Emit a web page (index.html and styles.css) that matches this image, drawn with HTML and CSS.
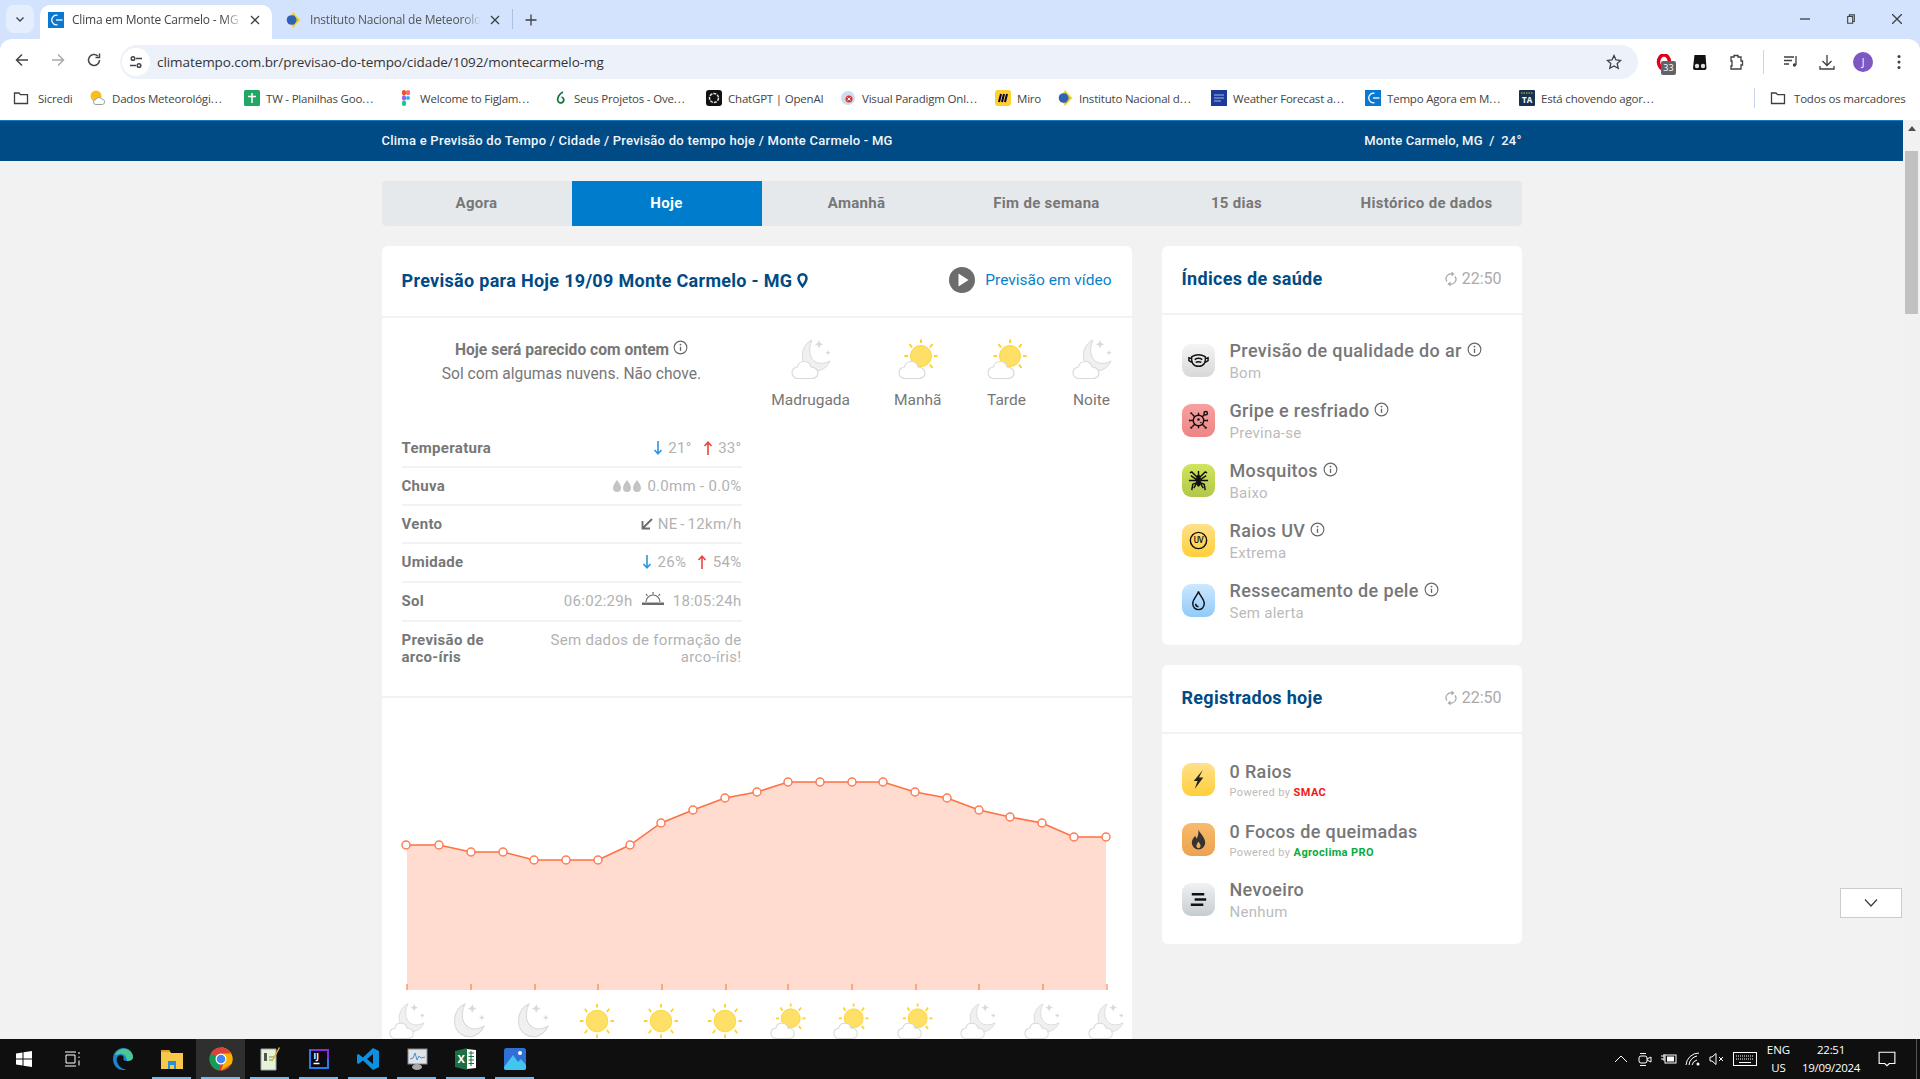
FILE: index.html
```html
<!DOCTYPE html>
<html lang="pt-BR">
<head>
<meta charset="utf-8">
<title>Clima em Monte Carmelo - MG</title>
<link rel="stylesheet" href="styles.css">
</head>
<body>
<svg class="defs" aria-hidden="true">
  <symbol id="moon" viewBox="0 0 40 40">
    <path class="moon-body" d="M21 1C10 6 8 22 17 29c8 6 18 2 22-7-9 5-18 2-20-7-1-6 0-10 2-14z"/>
    <path class="star" d="M28 1l1.200 3 3 1.200-3 1.200L28 9.500l-1.200-3.100-3-1.200 3-1.200zM37 11l.8 2 2 .8-2 .8-.8 2-.8-2-2-.8 2-.8z"/>
  </symbol>
  <symbol id="moon-full" viewBox="8 0 32 33">
    <path class="moon-body" d="M21 1C10 6 8 22 17 29c8 6 18 2 22-7-9 5-18 2-20-7-1-6 0-10 2-14z"/>
    <path class="star" d="M28 1l1.200 3 3 1.200-3 1.200L28 9.500l-1.200-3.100-3-1.200 3-1.200zM37 11l.8 2 2 .8-2 .8-.8 2-.8-2-2-.8 2-.8z"/>
  </symbol>
  <symbol id="moon-cloud" viewBox="0 0 40 40">
    <use href="#moon"/>
    <path class="cloud" d="M7 39.500c-4 0-6-3-6-6 0-3.500 3-5.500 5.500-5.500 .5-3.500 3.500-5.500 6.500-5.500 4 0 6.500 2.500 7 5.500 4 0 7 2.500 7 6s-3 5.500-6 5.500z"/>
  </symbol>
  <symbol id="sun" viewBox="0 0 40 40">
    <circle class="sun-body" cx="20" cy="20" r="12"/>
    <path class="ray" d="M20 1v4M20 35v4M1 20h4M35 20h4M6.500 6.500l2.500 3.500M33.500 6.500L31 10M6.500 33.500L9 30M33.500 33.500L31 30"/>
  </symbol>
  <symbol id="sun-cloud" viewBox="0 0 40 40">
    <circle class="sun-body" cx="23" cy="17" r="10.500"/>
    <path class="ray" d="M23 .5v3.500M23 30v3.500M6.500 17h3.500M36 17h3.500M11.500 5l2.500 3.500M34.500 5L32 8.500M34.500 29L32 25.500"/>
    <path class="cloud" d="M7 39.500c-4 0-6-3-6-6 0-3.500 3-5.500 5.500-5.500 .5-3.500 3.500-5.500 6.500-5.500 4 0 6.500 2.500 7 5.500 4 0 7 2.500 7 6s-3 5.500-6 5.500z"/>
  </symbol>
  <symbol id="info" viewBox="0 0 16 16">
    <circle cx="8" cy="8" r="6.800" fill="none" stroke="currentColor" stroke-width="1.200"/>
    <path d="M8 7.200v4.400" stroke="currentColor" stroke-width="1.400"/>
    <circle cx="8" cy="4.900" r="1" fill="currentColor"/>
  </symbol>
  <symbol id="refresh" viewBox="0 0 12 16">
    <path d="M2 10.500A4.800 4.800 0 0 1 7 3M10 5.500A4.800 4.800 0 0 1 5 13" fill="none" stroke="currentColor" stroke-width="1.300"/>
    <path d="M6.500 0.500v5L9.500 3zM5.500 10.500v5L2.500 13z" fill="currentColor"/>
  </symbol>
  <symbol id="folder" viewBox="0 0 16 16">
    <path d="M1.500 3h4.500l1.500 1.700h7v8.800h-13z" fill="none" stroke="#3c4043" stroke-width="1.300"/>
  </symbol>
  <symbol id="ct" viewBox="0 0 16 16">
    <rect width="16" height="16" fill="#0a78d1"/>
    <path d="M9.500 3.300A4.800 4.800 0 1 0 9.500 12.700" fill="none" stroke="#fff" stroke-width="1.300"/>
    <path d="M8 8h6.500" stroke="#fff" stroke-width="1.300"/>
  </symbol>
  <symbol id="inmet" viewBox="0 0 16 16">
    <path d="M8 0l7.500 8L8 16 3 8z" fill="#f7d23e"/>
    <path d="M8 2l5 6-5 6z" fill="#7fb26a"/>
    <circle cx="6.500" cy="8" r="4.800" fill="#2f62b5"/>
  </symbol>
</svg>

<header class="browser">
  <div class="tabstrip">
    <button class="tab-list"><svg class="i12" viewBox="0 0 12 12"><path d="M2.500 4.500L6 8l3.500-3.500" class="line-dark"/></svg></button>
    <div class="tab tab-active">
      <svg class="i16"><use href="#ct"/></svg>
      <span class="tab-title">Clima em Monte Carmelo - MG</span>
      <svg class="i10" viewBox="0 0 10 10"><path d="M1 1l8 8M9 1l-8 8" class="line-dark"/></svg>
    </div>
    <div class="tab">
      <svg class="i16"><use href="#inmet"/></svg>
      <span class="tab-title">Instituto Nacional de Meteorolo</span>
      <svg class="i10" viewBox="0 0 10 10"><path d="M1 1l8 8M9 1l-8 8" class="line-dark"/></svg>
    </div>
    <span class="tab-sep"></span>
    <svg class="i12 new-tab" viewBox="0 0 12 12"><path d="M6 .5v11M.5 6h11" class="line-dark"/></svg>
    <div class="win-controls">
      <svg class="i10" viewBox="0 0 10 10"><path d="M0 5h10" class="line-dark"/></svg>
      <svg class="i10" viewBox="0 0 10 12"><path d="M1 3h6v8H1zM3 3V1h6v8H7" class="line-dark"/></svg>
      <svg class="i10" viewBox="0 0 10 10"><path d="M0 0l10 10M10 0L0 10" class="line-dark"/></svg>
    </div>
  </div>
  <div class="toolbar">
    <svg class="i16 nav-btn" viewBox="0 0 16 16"><path d="M14 8H3M8 2.500L2.500 8 8 13.500" class="line-grey"/></svg>
    <svg class="i16 nav-btn" viewBox="0 0 16 16"><path d="M2 8h11M8 2.500L13.500 8 8 13.500" class="line-light"/></svg>
    <svg class="i16 nav-btn" viewBox="0 0 16 16"><path d="M13.500 8A5.500 5.500 0 1 1 11.800 4M13.500 1.500V5.500H9.500" class="line-grey"/></svg>
    <div class="omnibox">
      <span class="site-info"><svg class="i14" viewBox="0 0 14 14"><circle cx="4" cy="3.500" r="1.800" class="line-grey"/><path d="M7 3.500h6M1 10.500h6" class="line-grey"/><circle cx="10" cy="10.500" r="1.800" class="line-grey"/></svg></span>
      <span class="url">climatempo.com.br/previsao-do-tempo/cidade/1092/montecarmelo-mg</span>
      <svg class="i16 star-btn" viewBox="0 0 16 16"><path d="M8 1.500l2 4.400 4.700.5-3.500 3.200 1 4.700L8 12l-4.200 2.300 1-4.700L1.300 6.400 6 5.900z" class="line-dark"/></svg>
    </div>
    <div class="ext-icons">
      <span class="ext-opera"><svg class="i16" viewBox="0 0 16 16"><ellipse cx="8" cy="8" rx="5.500" ry="7" fill="none" stroke="#e0001b" stroke-width="3.500"/></svg><span class="ext-badge">33</span></span>
      <svg class="i16" viewBox="0 0 16 16"><path d="M2.500 1h11l1 13a2 2 0 0 1-2 2H3a2 2 0 0 1-2-2z" fill="#111"/><circle cx="5" cy="12" r="2.200" fill="#ddd"/><circle cx="11" cy="12" r="2.200" fill="#ddd"/></svg>
      <svg class="i16" viewBox="0 0 16 16"><path d="M3 3h3V1.500h4V3h3v4h1.500v4H13v4H3v-3h1V7H3z" class="line-dark"/></svg>
      <span class="tool-sep"></span>
      <svg class="i16" viewBox="0 0 16 16"><path d="M1 3h10M1 6.500h8M1 10h5M13 2v9" class="line-dark"/><circle cx="11.500" cy="11" r="1.700" fill="#3c4043"/></svg>
      <svg class="i16" viewBox="0 0 16 16"><path d="M8 1v10M3.500 7L8 11.500 12.500 7M1 12v3h14v-3" class="line-dark"/></svg>
      <span class="avatar">J</span>
      <svg class="i16" viewBox="0 0 16 16"><circle cx="8" cy="2.500" r="1.500" fill="#3c4043"/><circle cx="8" cy="8" r="1.500" fill="#3c4043"/><circle cx="8" cy="13.500" r="1.500" fill="#3c4043"/></svg>
    </div>
  </div>
  <nav class="bookmarks">
    <a class="bm bm-first"><svg class="i16"><use href="#folder"/></svg>Sicredi</a>
    <a class="bm"><svg class="i16" viewBox="0 0 16 16"><circle cx="6" cy="6" r="5.500" fill="#f9bf1e"/><path d="M6 14.500a2.500 2.500 0 0 1 0-5 3 3 0 0 1 5.500-.500 2.800 2.800 0 0 1 1 5.500z" fill="#fff" stroke="#9aa0a6"/></svg><span>Dados Meteorológi<span class="ell">...</span></span></a>
    <a class="bm"><svg class="i16" viewBox="0 0 16 16"><rect width="16" height="16" rx="1.500" fill="#23a566"/><path d="M8 3v10M4 6.500h8" stroke="#fff" stroke-width="1.500"/></svg><span>TW - Planilhas Goo<span class="ell">...</span></span></a>
    <a class="bm"><svg class="i16" viewBox="0 0 16 16"><rect x="4" y="0" width="4" height="5.300" rx="2" fill="#f24e1e"/><rect x="8" y="0" width="4" height="5.300" rx="2" fill="#ff7262"/><rect x="4" y="5.300" width="4" height="5.300" rx="2" fill="#a259ff"/><circle cx="10" cy="8" r="2" fill="#1abcfe"/><rect x="4" y="10.600" width="4" height="5.300" rx="2" fill="#0acf83"/></svg><span>Welcome to FigJam<span class="ell">...</span></span></a>
    <a class="bm"><svg class="i16" viewBox="0 0 16 16"><path d="M11 2C7 4 5 8 6 11a3 3 0 1 0 3.500-4" fill="none" stroke="#19703c" stroke-width="1.800"/></svg><span>Seus Projetos - Ove<span class="ell">...</span></span></a>
    <a class="bm"><svg class="i16" viewBox="0 0 16 16"><rect width="16" height="16" rx="3" fill="#111"/><circle cx="8" cy="8" r="4.500" fill="none" stroke="#ddd" stroke-width="1.500" stroke-dasharray="3 1"/></svg>ChatGPT | OpenAI</a>
    <a class="bm"><svg class="i16" viewBox="0 0 16 16"><circle cx="8" cy="8" r="7" fill="#cfdcec"/><circle cx="9" cy="9" r="3.500" fill="#d8383a"/><path d="M7.500 7.500l3 3M10.500 7.500l-3 3" stroke="#fff"/></svg><span>Visual Paradigm Onl<span class="ell">...</span></span></a>
    <a class="bm"><svg class="i16" viewBox="0 0 16 16"><rect width="16" height="16" rx="3" fill="#ffd02f"/><path d="M4 12l2-8M7 12l2-8M10 12l2-8" stroke="#050038" stroke-width="2"/></svg>Miro</a>
    <a class="bm"><svg class="i16"><use href="#inmet"/></svg><span>Instituto Nacional d<span class="ell">...</span></span></a>
    <a class="bm"><svg class="i16" viewBox="0 0 16 16"><rect width="16" height="16" fill="#1a3a9c"/><path d="M3 5h10M3 8h10M3 11h7" stroke="#cfd8f0" stroke-width=".8"/></svg><span>Weather Forecast a<span class="ell">...</span></span></a>
    <a class="bm"><svg class="i16"><use href="#ct"/></svg><span>Tempo Agora em M<span class="ell">...</span></span></a>
    <a class="bm"><svg class="i16" viewBox="0 0 16 16"><rect width="16" height="16" rx="1" fill="#17324d"/><path d="M2 3h12" stroke="#e8c43a" stroke-dasharray="1.500 1"/><text x="3" y="13" class="ta-mark">TA</text></svg><span>Está chovendo agor<span class="ell">...</span></span></a>
    <span class="bm-sep"></span>
    <a class="bm bm-all"><svg class="i16"><use href="#folder"/></svg>Todos os marcadores</a>
  </nav>
</header>

<div class="window">
  <main class="viewport">
    <div class="crumb-bar">
      <div class="crumb-inner">
        <span>Clima e Previsão do Tempo / Cidade / Previsão do tempo hoje / Monte Carmelo - MG</span>
        <span class="crumb-place">Monte Carmelo, MG &nbsp;/&nbsp; 24°</span>
      </div>
    </div>
    <div class="container">
      <div class="day-tabs">
        <span class="day-tab">Agora</span>
        <span class="day-tab day-tab-active">Hoje</span>
        <span class="day-tab">Amanhã</span>
        <span class="day-tab">Fim de semana</span>
        <span class="day-tab">15 dias</span>
        <span class="day-tab">Histórico de dados</span>
      </div>
      <div class="columns">
        <section class="card forecast">
          <div class="forecast-head">
            <h1 class="forecast-title">Previsão para Hoje 19/09 Monte Carmelo - MG
              <svg class="pin" viewBox="0 0 11 15"><path d="M5.500 1.300a4 4 0 0 1 4 4c0 3-4 8-4 8s-4-5-4-8a4 4 0 0 1 4-4z" fill="none" stroke="currentColor" stroke-width="2.500"/></svg>
            </h1>
            <a class="video-link">
              <svg class="play" viewBox="0 0 26 26"><circle cx="13" cy="13" r="13" fill="#6c6c6c"/><path d="M9.500 6.500l10 6.500-10 6.500z" fill="#fff"/></svg>
              Previsão em vídeo
            </a>
          </div>
          <div class="forecast-body">
            <div class="forecast-left">
              <div class="summary">
                <div class="summary-head">Hoje será parecido com ontem <svg class="info"><use href="#info"/></svg></div>
                <div>Sol com algumas nuvens. Não chove.</div>
              </div>
              <div class="rows">
                <div class="row"><span class="row-label">Temperatura</span><span class="row-val"><svg class="arrow arrow-down" viewBox="0 0 10 14"><path d="M5 0v12.500M1.500 9L5 12.800 8.500 9"/></svg> 21° <svg class="arrow arrow-up" viewBox="0 0 10 14"><path d="M5 14V1.500M1.500 5L5 1.200 8.500 5"/></svg> 33°</span></div>
                <div class="row"><span class="row-label">Chuva</span><span class="row-val"><svg class="drops" viewBox="0 0 30 14"><path d="M5 1c2 3 4 5 4 8a4 4 0 0 1-8 0c0-3 2-5 4-8zM15 1c2 3 4 5 4 8a4 4 0 0 1-8 0c0-3 2-5 4-8zM25 1c2 3 4 5 4 8a4 4 0 0 1-8 0c0-3 2-5 4-8z"/></svg> 0.0mm - 0.0%</span></div>
                <div class="row"><span class="row-label">Vento</span><span class="row-val row-val-tight"><svg class="wind" viewBox="0 0 12 12"><path d="M11 1L2 10M1.500 3v7.500H9"/></svg> NE - 12km/h</span></div>
                <div class="row row-tall"><span class="row-label">Umidade</span><span class="row-val"><svg class="arrow arrow-down" viewBox="0 0 10 14"><path d="M5 0v12.500M1.500 9L5 12.800 8.500 9"/></svg> 26% <svg class="arrow arrow-up" viewBox="0 0 10 14"><path d="M5 14V1.500M1.500 5L5 1.200 8.500 5"/></svg> 54%</span></div>
                <div class="row row-tall"><span class="row-label">Sol</span><span class="row-val">06:02:29h <svg class="sunrise" viewBox="0 0 22 14"><path d="M4 10a7 7 0 0 1 14 0" fill="none" stroke="#6c6c6c" stroke-width="1.200"/><path d="M0 10.500h22V13H0z" fill="#6c6c6c"/><path d="M11 0v2.500M4 2l1.500 2M18 2l-1.500 2" stroke="#6c6c6c" stroke-width="1.200"/></svg> 18:05:24h</span></div>
                <div class="row row-last"><span class="row-label">Previsão de<br>arco-íris</span><span class="row-val row-note">Sem dados de formação de<br>arco-íris!</span></div>
              </div>
            </div>
            <div class="periods">
              <div class="period"><svg class="period-icon"><use href="#moon-cloud"/></svg>Madrugada</div>
              <div class="period"><svg class="period-icon"><use href="#sun-cloud"/></svg>Manhã</div>
              <div class="period"><svg class="period-icon"><use href="#sun-cloud"/></svg>Tarde</div>
              <div class="period"><svg class="period-icon"><use href="#moon-cloud"/></svg>Noite</div>
            </div>
          </div>
          <div class="chart-wrap">
            <svg class="chart" viewBox="382 698 750 341">
              <polygon class="area" points="407,990 407,845 439,845 471,852 503,852 534,860 566,860 598,860 630,845 661,823 693,810 725,798 757,792 788,782 820,782 852,782 883,782 915,792 947,798 979,810 1010,817 1042,823 1074,837 1106,837 1106,990"/>
              <path class="ticks" d="M407 984v6M471 984v6M535 984v6M598 984v6M662 984v6M726 984v6M788 984v6M852 984v6M916 984v6M979 984v6M1043 984v6M1107 984v6"/>
              <polyline class="temp-line" points="406,845 439,845 471,852 503,852 534,860 566,860 598,860 630,845 661,823 693,810 725,798 757,792 788,782 820,782 852,782 883,782 915,792 947,798 979,810 1010,817 1042,823 1074,837 1106,837"/>
              <g class="temp-dots">
                <circle cx="406" cy="845" r="4"/><circle cx="439" cy="845" r="4"/><circle cx="471" cy="852" r="4"/><circle cx="503" cy="852" r="4"/><circle cx="534" cy="860" r="4"/><circle cx="566" cy="860" r="4"/><circle cx="598" cy="860" r="4"/><circle cx="630" cy="845" r="4"/><circle cx="661" cy="823" r="4"/><circle cx="693" cy="810" r="4"/><circle cx="725" cy="798" r="4"/><circle cx="757" cy="792" r="4"/><circle cx="788" cy="782" r="4"/><circle cx="820" cy="782" r="4"/><circle cx="852" cy="782" r="4"/><circle cx="883" cy="782" r="4"/><circle cx="915" cy="792" r="4"/><circle cx="947" cy="798" r="4"/><circle cx="979" cy="810" r="4"/><circle cx="1010" cy="817" r="4"/><circle cx="1042" cy="823" r="4"/><circle cx="1074" cy="837" r="4"/><circle cx="1106" cy="837" r="4"/>
              </g>
              <use href="#moon-cloud" x="389" y="1003" width="36" height="36"/>
              <use href="#moon-full" x="451" y="1003" width="34" height="35"/>
              <use href="#moon-full" x="515" y="1003" width="34" height="35"/>
              <use href="#sun" x="579" y="1003" width="36" height="36"/>
              <use href="#sun" x="643" y="1003" width="36" height="36"/>
              <use href="#sun" x="707" y="1003" width="36" height="36"/>
              <use href="#sun-cloud" x="770" y="1003" width="36" height="36"/>
              <use href="#sun-cloud" x="833" y="1003" width="36" height="36"/>
              <use href="#sun-cloud" x="897" y="1003" width="36" height="36"/>
              <use href="#moon-cloud" x="960" y="1003" width="36" height="36"/>
              <use href="#moon-cloud" x="1024" y="1003" width="36" height="36"/>
              <use href="#moon-cloud" x="1088" y="1003" width="36" height="36"/>
            </svg>
          </div>
        </section>
        <aside class="side">
          <section class="card">
            <div class="side-head"><h2 class="side-title">Índices de saúde</h2><span class="side-time"><svg class="refresh"><use href="#refresh"/></svg>22:50</span></div>
            <div class="side-list">
              <div class="idx"><span class="idx-icon ic-grey"><svg viewBox="0 0 24 24"><path d="M5 8c5-3 9-3 14 0 1 5-1 10-7 10S4 13 5 8zM5 10l-3-1v3l3 2M19 10l3-1v3l-3 2M8 11c3-2 5-2 8 0M9 14c2-1 4-1 6 0" class="line-black"/></svg></span><div class="idx-text"><div class="idx-title">Previsão de qualidade do ar <svg class="info"><use href="#info"/></svg></div><div class="idx-sub">Bom</div></div></div>
              <div class="idx"><span class="idx-icon ic-red"><svg viewBox="0 0 24 24"><circle cx="12" cy="12" r="5.500" class="line-black"/><path d="M12 6.500V4M12 17.500V20M6.500 12H4M17.500 12H20M8 8L5.500 5.500M16 16l2.500 2.500M16 8l2-2M8 16l-2.500 2.500" class="line-black"/><circle cx="12" cy="11" r="1.300" fill="#111"/><circle cx="14.500" cy="14" r=".8" fill="#111"/><circle cx="4.500" cy="4.500" r="1.200" fill="#111"/><circle cx="19.500" cy="4.500" r="1.800" class="line-black"/><circle cx="3" cy="12" r="1.100" fill="#111"/><circle cx="21" cy="12" r="1.100" fill="#111"/><circle cx="4.500" cy="19.500" r="1.200" fill="#111"/><circle cx="19.500" cy="19.500" r="1.200" fill="#111"/></svg></span><div class="idx-text"><div class="idx-title">Gripe e resfriado <svg class="info"><use href="#info"/></svg></div><div class="idx-sub">Previna-se</div></div></div>
              <div class="idx"><span class="idx-icon ic-green"><svg viewBox="0 0 24 24"><ellipse cx="12" cy="12" rx="2.500" ry="6.500" fill="#111"/><path d="M12 10L5 3l-2 1M12 10l7-7 2 1M11 12H2M13 12h9M11 14l-5 2-1 6M13 14l5 2 1 6M10 11L4 7M14 11l6-4M12 6V2M10 15l-3 5M14 15l3 5" class="line-black"/></svg></span><div class="idx-text"><div class="idx-title">Mosquitos <svg class="info"><use href="#info"/></svg></div><div class="idx-sub">Baixo</div></div></div>
              <div class="idx"><span class="idx-icon ic-yellow"><svg viewBox="0 0 24 24"><circle cx="12" cy="12" r="8.500" class="line-black"/><text x="12" y="15" class="uv-mark">UV</text></svg></span><div class="idx-text"><div class="idx-title">Raios UV <svg class="info"><use href="#info"/></svg></div><div class="idx-sub">Extrema</div></div></div>
              <div class="idx"><span class="idx-icon ic-blue"><svg viewBox="0 0 24 24"><path d="M12 2.500C13 7 18 10 18 15.500a6 6 0 0 1-12 0C6 10 11 7 12 2.500z" class="line-black"/><path d="M9 15.500a3 3 0 0 0 3 3" class="line-black"/></svg></span><div class="idx-text"><div class="idx-title">Ressecamento de pele <svg class="info"><use href="#info"/></svg></div><div class="idx-sub">Sem alerta</div></div></div>
            </div>
          </section>
          <section class="card">
            <div class="side-head"><h2 class="side-title">Registrados hoje</h2><span class="side-time"><svg class="refresh"><use href="#refresh"/></svg>22:50</span></div>
            <div class="side-list">
              <div class="idx"><span class="idx-icon ic-yellow"><svg viewBox="0 0 24 24"><path d="M16.500 2L7 13.500h4L8 22l9-12h-4.500z" fill="#222"/></svg></span><div class="idx-text idx-text-low"><div class="idx-title">0 Raios</div><div class="idx-powered">Powered by <b class="smac">SMAC</b></div></div></div>
              <div class="idx"><span class="idx-icon ic-orange"><svg viewBox="0 0 24 24"><path d="M12 1.500c1 4 7 7.500 7 14a7 7 0 0 1-14 0c0-3.500 2-5.500 3.500-7.500.5 1.500 1 2.500 1.500 3C11.500 9 12 6 12 1.500zM12 14c-1 2-2.200 3-2.200 4.800a2.200 2.200 0 0 0 4.400 0c0-1.800-1.200-3-2.200-4.800z" fill="#333" fill-rule="evenodd"/></svg></span><div class="idx-text idx-text-low"><div class="idx-title">0 Focos de queimadas</div><div class="idx-powered">Powered by <b class="agro">Agroclima PRO</b></div></div></div>
              <div class="idx"><span class="idx-icon ic-fog"><svg viewBox="0 0 24 24"><path d="M5 6.500h13M8 12h12M4 17.500h13" stroke="#111" stroke-width="2.400" fill="none"/></svg></span><div class="idx-text"><div class="idx-title">Nevoeiro</div><div class="idx-sub">Nenhum</div></div></div>
            </div>
          </section>
        </aside>
      </div>
    </div>
    <button class="float-btn"><svg class="i16" viewBox="0 0 16 16"><path d="M2 4.500L8 11l6-6.500" class="line-dark"/></svg></button>
  </main>
  <div class="scrollbar">
    <svg class="scroll-arrow" viewBox="0 0 8 5"><path d="M4 0l4 5H0z" fill="#505050"/></svg>
    <div class="scroll-thumb"></div>
  </div>
</div>

<footer class="taskbar">
  <span class="slot"><svg class="i16" viewBox="0 0 16 16"><path d="M0 2.500l6.500-1v6H0zM7.500 1.300L16 0v7.500H7.500zM0 8.500h6.500v6l-6.500-1zM7.500 8.500H16V16l-8.500-1.300z" fill="#fff"/></svg></span>
  <span class="slot"><svg class="i16" viewBox="0 0 16 16"><path d="M1 1h11M1 15h11M2 4h9v8H2zM15 1v2M15 5.500v1.500M15 9.500v5" fill="none" stroke="#fff" stroke-width="1"/></svg></span>
  <span class="slot"><svg class="i24" viewBox="0 0 24 24"><path d="M2 12C2 5 7 1 12.500 1 18 1 22 5 22 10c0 3-3 4-6 4-3 0-4-1-3.500-2.500 1-2.500-2-4-4.500-3C5.500 9.500 5 13 7 17c1.500 3 5 6 9 5-2 1-3 1-4 1C6 23 2 18 2 12z" fill="#1a83d4"/><path d="M4 8c2-5 7-7 11-6 4 1 7 5 7 8 0 3-3 4-6 4 0-5-4-8-7-7-2 .500-4 1-5 1z" fill="#4cc58f"/></svg></span>
  <span class="slot slot-open"><svg class="i24" viewBox="0 0 24 24"><path d="M1 3h8l2 3h12v16H1z" fill="#f7c948"/><path d="M1 3h8l1 2H1z" fill="#e0a526"/><path d="M8 14h8v8h-2v-4h-4v4H8z" fill="#2b8fd8"/></svg></span>
  <span class="slot slot-open slot-active"><svg class="i24" viewBox="0 0 24 24"><circle cx="12" cy="12" r="11.500" fill="#db4437"/><path d="M12 12L1.800 6.800A11.500 11.500 0 0 0 10 23.300z" fill="#0f9d58"/><path d="M12 .5A11.500 11.500 0 0 1 22.500 17L12 23.500 16 12z" fill="#f4b400"/><path d="M2 6.300A11.500 11.500 0 0 1 12 .5a11.500 11.500 0 0 1 10 6H12z" fill="#db4437"/><circle cx="12" cy="12" r="5.500" fill="#fff"/><circle cx="12" cy="12" r="4.300" fill="#4285f4"/></svg></span>
  <span class="slot slot-open"><svg class="i24" viewBox="0 0 24 24"><path d="M3 2h15v21H3z" fill="#e8f3d6" stroke="#9aa" stroke-width="1"/><path d="M6 6h3v8H6z" fill="#555"/><path d="M11 10h5M11 13h4" stroke="#7b9a3a"/><path d="M22 1l-6 11-2 3 1-4 6-11z" fill="#e8a33a"/></svg></span>
  <span class="slot slot-open"><svg class="i24" viewBox="0 0 24 24"><rect x="2" y="2" width="20" height="20" fill="#2c7be5"/><path d="M2 2h20v10z" fill="#8a2be2"/><rect x="4" y="4" width="16" height="16" fill="#0a0a14"/><text x="6.500" y="12" class="ij">IJ</text><path d="M6.500 16.500h6" stroke="#fff" stroke-width="1.500"/></svg></span>
  <span class="slot slot-open"><svg class="i24" viewBox="0 0 24 24"><path d="M17 1l6 3v16l-6 3L7 13.500 2.500 17 1 16V8l1.500-1L7 10.500zM17 7l-6 5 6 5z" fill="#0f8fe0" fill-rule="evenodd"/></svg></span>
  <span class="slot slot-open"><svg class="i24" viewBox="0 0 24 24"><rect x="3" y="2" width="19" height="15" fill="#dfe4e8" stroke="#888"/><path d="M5 12l3-1 2-5 2 7 2-4 2 2 4-1" stroke="#4a90d9" fill="none"/><ellipse cx="12" cy="20" rx="5" ry="3" fill="#aaa"/></svg></span>
  <span class="slot slot-open"><svg class="i24" viewBox="0 0 24 24"><path d="M13 2l9 1v18l-9 1z" fill="#fff"/><path d="M14.500 6H20M14.500 9.500H20M14.500 13H20M14.500 16.500H20M17 4v15" stroke="#1d6f42"/><path d="M1 4l12-3v22L1 20z" fill="#1d6f42"/><text x="3.500" y="16" class="xl-mark">X</text></svg></span>
  <span class="slot slot-open"><svg class="i24" viewBox="0 0 24 24"><rect x="1" y="1" width="22" height="22" rx="2.500" fill="#2f6fd6"/><path d="M1 20l9-12 5 7 3-3 5 6v3a2 2 0 0 1-2 2H3a2 2 0 0 1-2-2z" fill="#43c5ee"/><circle cx="17" cy="6" r="2" fill="#fff"/></svg></span>
  <div class="tray">
    <svg class="tray-icon" viewBox="0 0 16 16"><path d="M2 11l6-6 6 6" class="line-white"/></svg>
    <svg class="tray-icon" viewBox="0 0 16 16"><rect x="2" y="5" width="8" height="7" rx="2" class="line-white"/><path d="M10 8l4-2v5l-4-2M3 2.500h6M3 14.500h6" class="line-white"/></svg>
    <svg class="tray-icon" viewBox="0 0 16 16"><rect x="4" y="4" width="11" height="8" class="line-white"/><rect x="6" y="5.500" width="7" height="5" fill="#fff"/><path d="M0 5h3M0 8h3M3 3v7" class="line-white"/></svg>
    <svg class="tray-icon" viewBox="0 0 16 16"><path d="M1 14A13 13 0 0 1 14 2M4 14a10 10 0 0 1 8-9M7 14a7 7 0 0 1 5-5" class="line-white"/><circle cx="13" cy="13" r="1.500" fill="#fff"/></svg>
    <svg class="tray-icon" viewBox="0 0 16 16"><path d="M1 6h2l4-3.500v11L3 10H1zM10 6l4 4M14 6l-4 4" class="line-white"/></svg>
    <svg class="tray-kb" viewBox="0 0 24 14"><rect x=".5" y=".5" width="23" height="13" class="line-white"/><path d="M3 4h18M3 7h18" stroke="#fff" stroke-dasharray="1 1"/><path d="M6 10.500h12" stroke="#fff"/></svg>
    <div class="tray-lang">ENG<br>US</div>
    <div class="tray-clock">22:51<br>19/09/2024</div>
    <svg class="tray-icon tray-notif" viewBox="0 0 16 16"><path d="M1 2h14v10H10l-2 2-2-2H1z" class="line-white"/></svg>
    <span class="show-desktop"></span>
  </div>
</footer>
</body>
</html>
```

FILE: styles.css
```css
* { box-sizing: border-box; }
html, body { margin: 0; height: 100%; }
body {
  display: flex;
  flex-direction: column;
  height: 100vh;
  overflow: hidden;
  font-family: Roboto, "Liberation Sans", sans-serif;
  background: #f2f2f2;
}
button { border: 0; padding: 0; background: none; font: inherit; }
h1, h2 { margin: 0; }
.defs { width: 0; height: 0; position: absolute; }
.i10 { width: 10px; height: 10px; flex: none; }
.i12 { width: 12px; height: 12px; }
.i14 { width: 14px; height: 14px; }
.i16 { width: 16px; height: 16px; flex: none; }
.i24 { width: 24px; height: 24px; }
.line-dark, .line-grey, .line-light, .line-black, .line-white { fill: none; stroke-width: 1.300; }
.line-dark { stroke: #3c4043; }
.line-grey { stroke: #444; stroke-width: 1.500; }
.line-light { stroke: #a8abb0; stroke-width: 1.500; }
.line-black { stroke: #111; stroke-width: 1.500; }
.line-white { stroke: #fff; stroke-width: 1; }

/* browser chrome */
.browser { flex: none; height: 120px; background: #d3e3fd; font-family: "Open Sans", "Liberation Sans", sans-serif; color: #3c4043; }
.tabstrip { height: 39px; display: flex; align-items: flex-start; padding: 5px 0 0 6px; }
.tab-list { width: 28px; height: 28px; border-radius: 8px; background: #e4eefd; display: flex; align-items: center; justify-content: center; margin-right: 6px; }
.tab { width: 232px; height: 34px; padding: 0 12px 5px 8px; display: flex; align-items: center; gap: 8px; font-size: 12px; letter-spacing: -.2px; border-radius: 10px 10px 0 0; }
.tab-active { background: #fff; color: #444; }
.tab-title { flex: 1; white-space: nowrap; overflow: hidden; min-width: 0; -webkit-mask-image: linear-gradient(to left, transparent 0, #000 18px); mask-image: linear-gradient(to left, transparent 0, #000 18px); }
.tab:not(.tab-active) { width: 238px; padding-left: 13px; padding-right: 10px; color: #555; gap: 9px; }
.tab-sep { width: 1px; height: 20px; background: #a8c0e4; margin: 4px 0 0 2px; }
.new-tab { margin: 9px 0 0 12px; }
.win-controls { margin-left: auto; display: flex; align-items: center; gap: 36px; padding: 9px 18px 0 0; }
.toolbar { height: 41px; display: flex; align-items: center; padding: 0 14px; background: #fff; border-radius: 12px 12px 0 0; }
.nav-btn { margin-right: 20px; flex: none; }
.nav-btn:nth-child(3) { margin-right: 18px; }
.omnibox { width: 1518px; height: 34px; border-radius: 17px; background: #edf2fa; display: flex; align-items: center; padding: 0 16px 0 2px; margin-top: 5px; flex: none; }
.site-info { width: 28px; height: 28px; border-radius: 50%; background: #fff; display: flex; align-items: center; justify-content: center; margin-right: 7px; }
.url { font-size: 13.500px; letter-spacing: -.07px; color: #333; white-space: nowrap; }
.star-btn { margin-left: auto; }
.ext-icons { display: flex; align-items: center; gap: 20px; margin-left: 18px; margin-top: 5px; }
.ext-opera { position: relative; display: flex; }
.ext-badge { position: absolute; left: 5px; top: 7px; width: 15px; height: 14px; background: #5f6368; color: #fff; font-size: 9px; line-height: 14px; text-align: center; border-radius: 2px; }
.tool-sep { width: 1px; height: 24px; background: #c7d6ee; margin: 0 -1px; }
.avatar { width: 20px; height: 20px; border-radius: 50%; background: #7e57c2; color: #fff; font-size: 10px; line-height: 20px; text-align: center; margin: 0 -2px; }
.bookmarks {
  height: 40px;
  display: grid;
  grid-template-columns: 77px 154px 154px 154px 154px 134px 155px 62px 154px 154px 154px 235px 16px 1fr;
  align-items: center;
  padding: 0 0 4px 13px;
  font-size: 11.500px;
  letter-spacing: -.2px;
  color: #444;
  background: #fff;
}
.bm { display: flex; align-items: center; gap: 6px; white-space: nowrap; }
.bm-first { gap: 9px; }
.ell { letter-spacing: 1px; }
.ta-mark { font-size: 8px; font-weight: 700; fill: #fff; letter-spacing: 0; }
.bm-sep { width: 1px; height: 20px; background: #c7d6ee; }
.bm-all { gap: 8px; }

/* page */
.window { flex: 1; min-height: 0; display: flex; }
.viewport { flex: 1; min-width: 0; position: relative; overflow: hidden; }
.scrollbar { width: 17px; flex: none; background: #f1f1f1; display: flex; flex-direction: column; align-items: center; padding-top: 6px; }
.scroll-arrow { width: 8px; height: 5px; }
.scroll-thumb { width: 13px; height: 163px; margin-top: 20px; background: #c1c1c1; }
.crumb-bar { height: 41px; background: #004b85; border-top: 1px solid #0a7cc4; color: #f4f6f9; font-size: 13px; font-weight: 500; letter-spacing: .25px; }
.crumb-inner { width: 1140px; margin: 0 auto; height: 100%; display: flex; justify-content: space-between; align-items: center; padding-bottom: 1px; }
.crumb-place { letter-spacing: .14px; }
.container { width: 1140px; margin: 20px auto 0; }
.day-tabs { display: grid; grid-template-columns: repeat(6, 1fr); height: 45px; background: #e6e9ec; border-radius: 4px; overflow: hidden; }
.day-tab { display: flex; align-items: center; justify-content: center; font-size: 15px; font-weight: 700; letter-spacing: .3px; color: #777; padding-bottom: 2px; }
.day-tab-active { background: #007ccc; color: #fff; }
.columns { display: grid; grid-template-columns: 750px 360px; gap: 30px; margin-top: 20px; }
.card { background: #fff; border-radius: 6px; }
.forecast { border-radius: 6px 6px 0 0; }
.forecast-head { height: 72px; padding: 0 20px 2px; border-bottom: 2px solid #f2f2f2; display: flex; align-items: center; justify-content: space-between; }
.forecast-title { font-size: 18px; font-weight: 700; letter-spacing: .3px; color: #004b85; display: flex; align-items: center; gap: 5px; }
.pin { width: 11px; height: 15px; }
.video-link { display: flex; align-items: center; gap: 10px; font-size: 15.500px; color: #0a7fc9; }
.play { width: 26px; height: 26px; }
.forecast-body { display: grid; grid-template-columns: 340px 1fr; padding: 20px 20px 30px; border-bottom: 2px solid #f2f2f2; }
.summary { text-align: center; font-size: 15.600px; line-height: 24px; color: #777; }
.summary-head { font-weight: 700; }
.info { width: 15px; height: 15px; color: #666; flex: none; }
.rows { margin-top: 44px; font-size: 15px; letter-spacing: .3px; }
.row { min-height: 38px; display: flex; align-items: center; justify-content: space-between; border-bottom: 2px solid #f2f2f2; }
.row-tall { min-height: 39px; padding-bottom: 1px; }
.row-last { border-bottom: 0; align-items: flex-start; padding-top: 10px; line-height: 17px; }
.row-label { font-weight: 700; color: #777; }
.row-val { color: #b2b2b2; display: flex; align-items: center; gap: 1.500px; white-space: pre; }
.row-val-tight { word-spacing: -1.200px; }
.row-note { display: block; text-align: right; white-space: normal; }
.arrow { width: 10px; height: 14px; fill: none; stroke-width: 1.600; }
.arrow-down { stroke: #2b96e0; }
.arrow-up { stroke: #e8453c; margin-left: 5.500px; }
.drops { width: 30px; height: 14px; fill: #c4c4c4; }
.wind { width: 12px; height: 12px; fill: none; stroke: #6c6c6c; stroke-width: 1.800; }
.sunrise { width: 22px; height: 14px; margin: -4px 3.500px 0; }
.periods { display: flex; justify-content: flex-end; gap: 45px; align-items: flex-start; }
.period { display: flex; flex-direction: column; align-items: center; gap: 12px; font-size: 15.500px; color: #777; padding-top: 1px; }
.period:first-child { margin-right: -1px; }
.period-icon { width: 40px; height: 40px; }
.moon-body { fill: #f0f0f0; stroke: #d9d9d9; stroke-width: 1; }
.star { fill: #d9d9d9; }
.cloud { fill: #fff; stroke: #d9d9d9; stroke-width: 1.200; }
.sun-body { fill: #ffe066; stroke: #fcd53f; stroke-width: 1; }
.ray { stroke: #ffd02e; stroke-width: 2; fill: none; }
.chart-wrap { height: 341px; }
.chart { display: block; width: 750px; height: 341px; }
.area { fill: #ffdbd0; }
.ticks { stroke: #ff6a3d; stroke-width: 1; fill: none; }
.temp-line { fill: none; stroke: #ff7043; stroke-width: 1.500; }
.temp-dots circle { fill: #fff; stroke: #ff7b54; stroke-width: 1.500; }
.side { display: flex; flex-direction: column; gap: 20px; }
.side-head { height: 69px; padding: 0 20px 2px; border-bottom: 2px solid #f2f2f2; display: flex; align-items: center; justify-content: space-between; }
.side-title { font-size: 18px; font-weight: 700; letter-spacing: .3px; color: #004b85; }
.side-time { display: flex; align-items: center; gap: 5px; font-size: 16px; color: #aaa; }
.refresh { width: 12px; height: 16px; color: #aaa; }
.side-list { display: flex; flex-direction: column; gap: 27px; padding: 29px 20px 28px; }
.idx { height: 33px; display: flex; align-items: flex-start; gap: 15px; }
.idx-text { margin-top: -3px; }
.idx-text-low { margin-top: -1px; }
.idx-icon { width: 33px; height: 33px; border-radius: 9px; display: flex; align-items: center; justify-content: center; flex: none; }
.idx-icon svg { width: 23px; height: 23px; }
.uv-mark { font-size: 8.500px; font-weight: 500; text-anchor: middle; fill: #111; letter-spacing: -.5px; }
.ic-grey { background: linear-gradient(#f4f4f4, #d8d8d8); }
.ic-red { background: linear-gradient(#f7a0a0, #ee8585); }
.ic-green { background: linear-gradient(#d3e35c, #b2c74c); }
.ic-yellow { background: linear-gradient(#ffe08a, #ffcf3a); }
.ic-blue { background: linear-gradient(#cde8ff, #90caf9); }
.ic-orange { background: linear-gradient(#f7bb6e, #eea24f); }
.ic-fog { background: linear-gradient(#f0f2f3, #c5ccd0); }
.idx-title { font-size: 18px; font-weight: 500; letter-spacing: .35px; line-height: 20px; color: #777; display: flex; align-items: center; gap: 5px; white-space: nowrap; }
.idx-title .info { margin-top: -3px; }
.idx-sub { font-size: 15px; letter-spacing: .25px; line-height: 20px; margin-top: 2px; color: #bbb; }
.idx-powered { font-size: 11px; letter-spacing: .4px; line-height: 16px; margin-top: 3px; color: #bbb; }
.smac { color: #f01818; }
.agro { color: #0aab3d; }
.float-btn { position: absolute; right: 1px; top: 768px; width: 62px; height: 30px; background: #fff; border: 1px solid #ccc; display: flex; align-items: center; justify-content: center; }

/* taskbar */
.taskbar { flex: none; height: 40px; background: #0f0f0f; display: flex; color: #fff; font-family: "Open Sans", "Liberation Sans", sans-serif; font-size: 12px; }
.slot { width: 49px; display: flex; align-items: center; justify-content: center; position: relative; }
.slot:first-child { padding-right: 1px; }
.slot:nth-child(2) { padding-right: 3px; }
.slot-open::after { content: ""; position: absolute; left: 5px; right: 5px; bottom: 0; height: 2px; background: #76b9ed; }
.slot-active { background: #2f2f2f; }
.ij { font-size: 8px; font-weight: 700; fill: #fff; }
.xl-mark { font-size: 11px; font-weight: 700; fill: #fff; }
.tray { margin-left: auto; display: flex; align-items: center; }
.tray-icon { width: 16px; height: 16px; margin-right: 8px; }
.tray-kb { width: 24px; height: 14px; margin: 0; }
.tray-lang { width: 43px; text-align: center; line-height: 18px; font-size: 11.500px; }
.tray-clock { width: 62px; text-align: center; line-height: 18px; font-size: 11.500px; letter-spacing: -.3px; white-space: nowrap; }
.tray-notif { width: 18px; height: 18px; margin: 0 0 0 16px; }
.show-desktop { width: 1px; height: 40px; background: #555; margin-left: 20px; margin-right: 3px; }
```
